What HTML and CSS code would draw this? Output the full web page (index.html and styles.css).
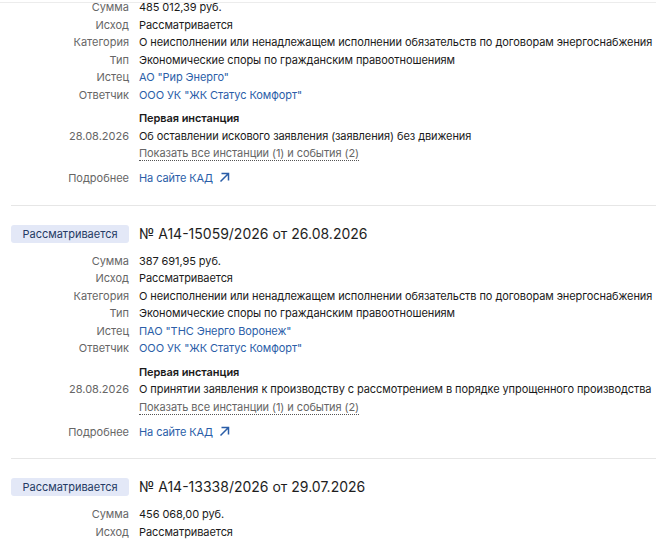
FILE: index.html
```html
<!DOCTYPE html>
<html lang="ru">
<head>
<meta charset="utf-8">
<link rel="stylesheet" href="styles.css">
</head>
<body>
<div class="topline"></div>
<div class="list">
  <div class="case">
    <div class="head">
      <span class="badge">Рассматривается</span>
      <span class="title">№ А14-16012/2026 от 27.08.2026</span>
    </div>
    <div class="fields">
      <div class="lbl">Сумма</div><div class="val">485 012,39 руб.</div>
      <div class="lbl">Исход</div><div class="val">Рассматривается</div>
      <div class="lbl">Категория</div><div class="val">О неисполнении или ненадлежащем исполнении обязательств по договорам энергоснабжения</div>
      <div class="lbl">Тип</div><div class="val">Экономические споры по гражданским правоотношениям</div>
      <div class="lbl">Истец</div><div class="val"><a class="link">АО "Рир Энерго"</a></div>
      <div class="lbl">Ответчик</div><div class="val"><a class="link">ООО УК "ЖК Статус Комфорт"</a></div>
    </div>
    <div class="fields inst">
      <div class="lbl"></div><div class="val strong">Первая инстанция</div>
      <div class="lbl">28.08.2026</div><div class="val">Об оставлении искового заявления (заявления) без движения</div>
      <div class="lbl"></div><div class="val"><span class="dotted">Показать все инстанции (1) и события (2)</span></div>
    </div>
    <div class="fields more">
      <div class="lbl">Подробнее</div><div class="val"><a class="link">На сайте КАД <svg class="arr" width="11" height="11" viewBox="0 0 11 11"><path d="M1.5 9.5 L9 2 M2.5 1.5 H9.5 V8.5" fill="none" stroke="currentColor" stroke-width="1.5"/></svg></a></div>
    </div>
  </div>

  <div class="case">
    <div class="head">
      <span class="badge">Рассматривается</span>
      <span class="title">№ А14-15059/2026 от 26.08.2026</span>
    </div>
    <div class="fields">
      <div class="lbl">Сумма</div><div class="val">387 691,95 руб.</div>
      <div class="lbl">Исход</div><div class="val">Рассматривается</div>
      <div class="lbl">Категория</div><div class="val">О неисполнении или ненадлежащем исполнении обязательств по договорам энергоснабжения</div>
      <div class="lbl">Тип</div><div class="val">Экономические споры по гражданским правоотношениям</div>
      <div class="lbl">Истец</div><div class="val"><a class="link">ПАО "ТНС Энерго Воронеж"</a></div>
      <div class="lbl">Ответчик</div><div class="val"><a class="link">ООО УК "ЖК Статус Комфорт"</a></div>
    </div>
    <div class="fields inst">
      <div class="lbl"></div><div class="val strong">Первая инстанция</div>
      <div class="lbl">28.08.2026</div><div class="val">О принятии заявления к производству с рассмотрением в порядке упрощенного производства</div>
      <div class="lbl"></div><div class="val"><span class="dotted">Показать все инстанции (1) и события (2)</span></div>
    </div>
    <div class="fields more">
      <div class="lbl">Подробнее</div><div class="val"><a class="link">На сайте КАД <svg class="arr" width="11" height="11" viewBox="0 0 11 11"><path d="M1.5 9.5 L9 2 M2.5 1.5 H9.5 V8.5" fill="none" stroke="currentColor" stroke-width="1.5"/></svg></a></div>
    </div>
  </div>

  <div class="case">
    <div class="head">
      <span class="badge">Рассматривается</span>
      <span class="title">№ А14-13338/2026 от 29.07.2026</span>
    </div>
    <div class="fields">
      <div class="lbl">Сумма</div><div class="val">456 068,00 руб.</div>
      <div class="lbl">Исход</div><div class="val">Рассматривается</div>
      <div class="lbl">Категория</div><div class="val">О неисполнении или ненадлежащем исполнении обязательств по договорам энергоснабжения</div>
    </div>
  </div>
</div>
</body>
</html>
```

FILE: styles.css
```css
html, body {
  margin: 0;
  padding: 0;
  background: #fff;
  overflow: hidden;
}
body {
  font-family: Inter, "Noto Sans", sans-serif;
  font-size: 11px;
  color: #1a1a1a;
}
.topline {
  position: fixed;
  top: 2px;
  left: 0;
  right: 0;
  height: 1px;
  background: #ececec;
  z-index: 2;
}
.list {
  margin-top: -49px;
}
.case {
  margin-left: 11px;
  border-top: 1px solid #e6e6e6;
  padding: 19px 0 17px;
}
.head {
  display: flex;
  align-items: center;
  gap: 10px;
}
.badge {
  width: 118px;
  height: 18px;
  line-height: 18px;
  text-align: center;
  background: #e3e8f7;
  color: #253a64;
  border-radius: 3px;
  font-size: 11px;
}
.title {
  font-size: 14px;
  color: #1e1e1e;
  line-height: 18px;
}
.fields {
  display: grid;
  grid-template-columns: 118px 1fr;
  column-gap: 10px;
  line-height: 17.5px;
  margin-top: 10px;
}
.fields.inst {
  margin-top: 6px;
}
.fields.more {
  margin-top: 7.5px;
}
.lbl {
  text-align: right;
  color: #666;
  white-space: nowrap;
}
.val {
  white-space: nowrap;
  letter-spacing: -0.08px;
}
.strong {
  font-weight: 600;
}
.link {
  color: #2b5ea8;
  text-decoration: none;
}
.dotted {
  color: #666;
  border-bottom: 1px dotted #555;
}
.arr {
  margin-left: 3px;
  vertical-align: -1px;
}
```
